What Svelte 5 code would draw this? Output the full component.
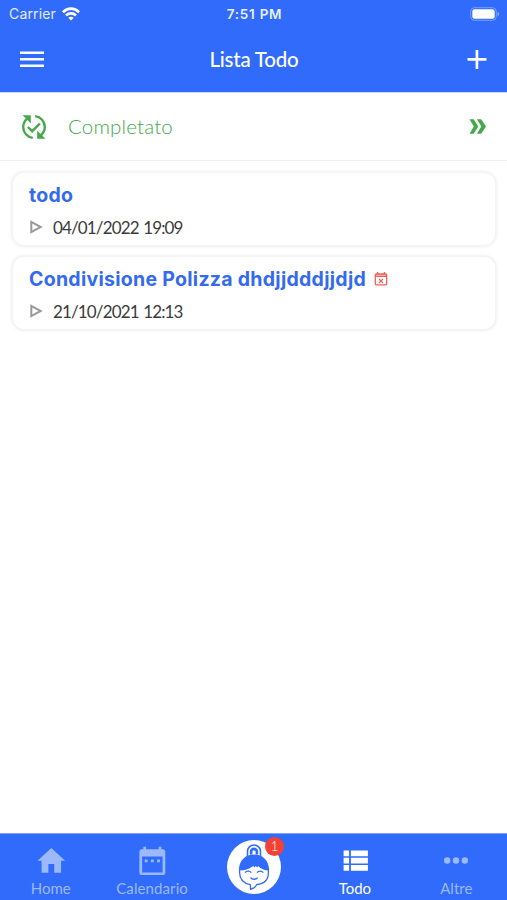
<script lang="ts">
  interface Todo {
    title: string;
    date: string;
    expired: boolean;
  }

  const todos: Todo[] = [
    { title: 'todo', date: '04/01/2022 19:09', expired: false },
    { title: 'Condivisione Polizza dhdjjdddjjdjd', date: '21/10/2021 12:13', expired: true }
  ];

  let active = $state('Todo');
</script>

<div class="screen">
  <header class="header">
    <div class="status">
      <div class="carrier">
        <span>Carrier</span>
        <svg class="wifi" viewBox="0 0 18 14" fill="none" stroke="currentColor" stroke-width="2.7">
          <path d="M.9 5.2C5.5.5 12.5.5 17.1 5.2" />
          <path d="M4 8.400c2.800-2.700 7.200-2.700 10 0" />
          <path d="M9 13.600l-2.700-2.800c1.500-1.300 3.900-1.300 5.400 0z" fill="currentColor" stroke="none" />
        </svg>
      </div>
      <span class="time">7:51 PM</span>
      <svg class="battery" viewBox="0 0 30 14">
        <rect x=".7" y=".7" width="25.600" height="12.600" rx="3.800" fill="none" stroke="#fff" stroke-opacity=".35" />
        <rect x="2.300" y="2.300" width="22.400" height="9.400" rx="2.300" fill="#fff" />
        <path d="M27.500 4.700c2.200.8 2.200 3.800 0 4.600z" fill="#fff" fill-opacity=".4" />
      </svg>
    </div>
    <div class="toolbar">
      <button class="tool" aria-label="Menu">
        <svg width="24" height="18" viewBox="0 0 24 18" fill="currentColor">
          <path d="M0 .4h24v2.700H0zM0 6.900h24v2.700H0zM0 13.400h24v2.700H0z" />
        </svg>
      </button>
      <h1>Lista Todo</h1>
      <button class="tool" aria-label="Aggiungi">
        <svg width="20" height="20" viewBox="0 0 20 20" fill="currentColor">
          <path d="M8.600 0h2.700v8.100h8.200v2.700h-8.200V19H8.600v-8.200H.5V8.100h8.100z" />
        </svg>
      </button>
    </div>
  </header>

  <div class="completed">
    <svg class="cycle" viewBox="0 0 26 26" fill="none" stroke="currentColor" stroke-width="2.400">
      <path d="M11.800 23.900C6.200 23.200 2.200 18.700 2.200 13c0-3.700 1.700-6.500 4.300-8.700" />
      <path d="M1.500 1.200h8.300v8.300L6.900 6.600 4.400 4.100z" fill="currentColor" stroke="none" />
      <path d="M14.200 2.100c5.600.7 9.600 5.200 9.600 10.900 0 3.700-1.700 6.500-4.300 8.700" />
      <path d="M24.500 24.800h-8.300v-8.300l2.900 2.900 2.500 2.500z" fill="currentColor" stroke="none" />
      <path d="M6.900 13l4.300 4.200 7.700-7.700" />
    </svg>
    <span class="completed-label">Completato</span>
    <svg class="chevrons" viewBox="0 0 18 16" fill="currentColor">
      <path d="M.5.200h4.200l4.600 7.200-4.600 7.300H.5l4.300-7.300z" />
      <path d="M8 .200h4.200l4.800 7.200-4.800 7.300H8l4.300-7.300z" />
    </svg>
  </div>

  <main class="list">
    {#each todos as todo}
      <article class="card">
        <h2>
          {todo.title}
          {#if todo.expired}
            <svg class="expired" viewBox="0 0 14 15" fill="none" stroke="currentColor">
              <rect x="1.300" y="1.800" width="11.400" height="11.100" rx="1.200" stroke-width="1.300" />
              <path d="M1 2.900h12M1 4.500h12" stroke-width="1.100" />
              <path d="M3.600 0v2.500M10.400 0v2.500" stroke-width="1.400" />
              <path d="M5 7l4 4M9 7l-4 4" stroke-width="1.200" />
            </svg>
          {/if}
        </h2>
        <div class="date">
          <svg class="play" viewBox="0 0 14 14" fill="none" stroke="currentColor" stroke-width="2">
            <path d="M2.300 1.900v10.200L11.700 7z" />
          </svg>
          <span>{todo.date}</span>
        </div>
      </article>
    {/each}
  </main>

  <nav class="tabs">
    <button class="tab" class:active={active === 'Home'} onclick={() => (active = 'Home')}>
      <svg viewBox="0 0 32 32" fill="currentColor">
        <path d="M16.300 3l13.900 12.700h-4.100V27.700h-6.900v-8.700h-5.800v8.700H6.600V15.700H2.500z" />
      </svg>
      <span>Home</span>
    </button>
    <button class="tab" class:active={active === 'Calendario'} onclick={() => (active = 'Calendario')}>
      <svg viewBox="0 0 32 32" fill="currentColor">
        <path fill-rule="evenodd" d="M7.300 1.700H10v2.500h12.700V1.700h2.700v2.500h1.200a2.700 2.700 0 0 1 2.700 2.700v20.500a2.700 2.700 0 0 1-2.700 2.700H6.100a2.700 2.700 0 0 1-2.700-2.700V6.900a2.700 2.700 0 0 1 2.700-2.700h1.200zM6.100 11.500v15.900h20.500V11.500z" />
        <path d="M8.700 14.400h2.900v2.900H8.700zM14.900 14.400h2.900v2.900h-2.900zM21.100 14.400H24v2.900h-2.900z" />
      </svg>
      <span class="wide">Calendario</span>
    </button>
    <button class="tab assistant" aria-label="Assistente">
      <span class="avatar">
        <svg viewBox="0 0 54 54" fill="none" stroke="#316bfc">
          <path d="M20.500 17v-5.500a6.500 6.500 0 0 1 13 0V17" stroke-width="1.600" />
          <path d="M22.800 14.500v-2.700a4.200 4.200 0 0 1 8.400 0v2.700h-2.600v-2.600a1.600 1.600 0 0 0-3.200 0v2.600z" fill="#316bfc" stroke="none" />
          <path d="M12 30.500C11.800 20.500 18.300 14.500 27 14.500s15.200 6 15 16c-4.500 0-8.100-1.600-10.900-4.500l-.8 1.600-1.600-1.700-1 1.600-1.500-1.600C22.200 29 17.500 30.500 12 30.500z" fill="#316bfc" stroke="none" />
          <path d="M12.600 28v4.500c0 7 4 10.800 10.700 12.200l.3 4.700c3.300-1 5.200-2.800 6.200-4.900 7.600-.6 11.600-5 11.600-12V28" stroke-width="1.300" />
          <path d="M18 32.600c1.500-2 4.800-2 6.300 0M30 32.600c1.500-2 4.800-2 6.300 0" stroke-width="1.300" />
          <path d="M23.500 37.600c1.800 2.300 5.400 2.300 7.200 0" stroke-width="1.500" />
        </svg>
        <span class="badge">1</span>
      </span>
    </button>
    <button class="tab" class:active={active === 'Todo'} onclick={() => (active = 'Todo')}>
      <svg viewBox="0 0 32 32" fill="currentColor">
        <path d="M4.600 5.400h5.500v5.900H4.600zM11.900 5.400h17v5.900h-17zM4.600 12.700h5.500v5.800H4.600zM11.900 12.700h17v5.800h-17zM4.600 19.900h5.500v5.900H4.600zM11.900 19.900h17v5.900h-17z" />
      </svg>
      <span>Todo</span>
    </button>
    <button class="tab" class:active={active === 'Altre'} onclick={() => (active = 'Altre')}>
      <svg viewBox="0 0 32 32" fill="currentColor">
        <circle cx="7.200" cy="15.500" r="3.200" />
        <circle cx="16" cy="15.500" r="3.200" />
        <circle cx="24.800" cy="15.500" r="3.200" />
      </svg>
      <span>Altre</span>
    </button>
  </nav>
</div>

<style>
  :global(body) {
    margin: 0;
    background: #fff;
  }

  .screen {
    display: flex;
    flex-direction: column;
    height: 900px;
    font-family: Lato, sans-serif;
    background: #fff;
    overflow: hidden;
  }

  button {
    padding: 0;
    border: 0;
    background: none;
    color: inherit;
    font-family: inherit;
  }

  svg {
    display: block;
    flex: none;
  }

  .header {
    height: 92px;
    flex: none;
    background: #316bfc;
    color: #fff;
    border-bottom: 1px solid #c9d8fe;
  }

  .status {
    display: grid;
    grid-template-columns: 1fr auto 1fr;
    align-items: center;
    height: 27px;
    padding: 0 7px 0 9px;
    font-family: Inter, sans-serif;
  }

  .carrier {
    display: flex;
    align-items: center;
    gap: 6px;
    font-size: 14px;
    letter-spacing: 0.15px;
    color: #e4ecff;
  }

  .wifi {
    width: 18px;
    height: 14px;
    color: #fff;
  }

  .time {
    font-size: 13.5px;
    font-weight: 600;
    letter-spacing: 0.75px;
    color: #eaf0ff;
  }

  .battery {
    width: 30px;
    height: 14px;
    justify-self: end;
  }

  .toolbar {
    display: flex;
    align-items: center;
    justify-content: space-between;
    height: 65px;
    padding: 0 20px;
  }

  .tool {
    display: flex;
    width: 24px;
    justify-content: center;
  }

  .tool:last-child {
    width: 20px;
  }

  h1 {
    margin: 0;
    padding: 0 3px 2px 0;
    font-size: 20.5px;
    font-weight: 500;
    letter-spacing: -0.2px;
    line-height: 24px;
  }

  .completed {
    display: flex;
    align-items: center;
    height: 67px;
    flex: none;
    padding: 0 20px 0 21px;
    border-bottom: 1px solid #efefef;
    color: #45a94c;
  }

  .cycle {
    width: 26px;
    height: 26px;
  }

  .completed-label {
    flex: 1;
    margin-left: 21px;
    padding-bottom: 1px;
    font-size: 20.5px;
    font-weight: 300;
    letter-spacing: 0.15px;
  }

  .chevrons {
    width: 18px;
    height: 16px;
  }

  .list {
    display: flex;
    flex: 1;
    flex-direction: column;
    gap: 12px;
    padding: 12px 12px 0 13px;
  }

  .card {
    box-sizing: border-box;
    height: 72px;
    padding: 9px 16px;
    border-radius: 11px;
    background: #fff;
    box-shadow: 0 0 3px 2px rgba(0, 0, 0, 0.06);
  }

  h2 {
    display: flex;
    align-items: center;
    gap: 8px;
    height: 26px;
    margin: 0;
    font-family: Inter, sans-serif;
    font-size: 19.5px;
    font-weight: 700;
    letter-spacing: 0.28px;
    color: #346af0;
    white-space: nowrap;
  }

  .expired {
    width: 14px;
    height: 15px;
    color: #ea6259;
  }

  .date {
    display: flex;
    align-items: center;
    gap: 10px;
    height: 38px;
    font-size: 17px;
    letter-spacing: -0.86px;
    word-spacing: 1px;
    color: #3b3b3b;
  }

  .play {
    width: 14px;
    height: 14px;
    color: #999;
  }

  .tabs {
    display: grid;
    grid-template-columns: repeat(5, 1fr);
    height: 67px;
    flex: none;
    box-sizing: border-box;
    border-top: 1px solid #7fa3fd;
    background: #316bfc;
  }

  .tab {
    display: flex;
    flex-direction: column;
    align-items: center;
    padding-top: 11px;
    color: #9cb9fe;
    font-size: 15px;
    line-height: 23px;
  }

  .tab > svg {
    width: 32px;
    height: 32px;
  }

  .tab.active {
    color: #fff;
  }

  .wide {
    letter-spacing: 0.1px;
  }

  .assistant {
    padding: 6px 0 0 1px;
  }

  .avatar {
    position: relative;
    display: block;
    width: 54px;
    height: 54px;
    border-radius: 50%;
    background: #fff;
  }

  .badge {
    position: absolute;
    top: -3px;
    right: -3px;
    width: 19px;
    height: 19px;
    border-radius: 50%;
    background: #f34235;
    color: #fff;
    font-size: 13px;
    font-weight: 300;
    line-height: 18px;
    text-align: center;
  }
</style>
